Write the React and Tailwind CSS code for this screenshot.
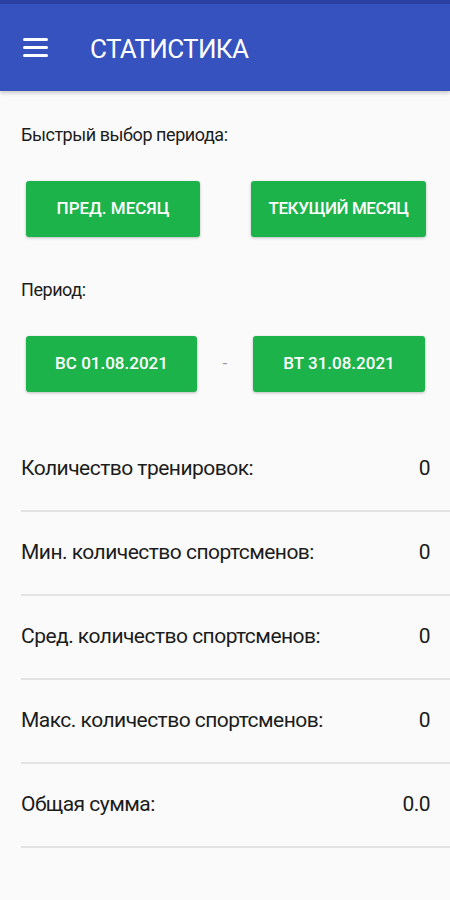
const rows = [
  { label: 'Количество тренировок:', value: '0' },
  { label: 'Мин. количество спортсменов:', value: '0' },
  { label: 'Сред. количество спортсменов:', value: '0' },
  { label: 'Макс. количество спортсменов:', value: '0' },
  { label: 'Общая сумма:', value: '0.0' },
];

function GreenButton({ children, className = '' }) {
  return (
    <button
      className={`h-[56px] rounded-[3px] bg-[#1db34b] text-white text-[17px] font-medium shadow-[0_1px_3px_rgba(0,0,0,0.25)] flex items-center justify-center ${className}`}
    >
      {children}
    </button>
  );
}

export default function App() {
  return (
    <div className="min-h-[900px] bg-[#fafafa] font-['Roboto',sans-serif] text-[#1c1c1c]">
      <header className="bg-[#3652bf] shadow-[0_2px_4px_rgba(0,0,0,0.2)]">
        <div className="h-[4px] bg-[#2b40a3]" />
        <div className="h-[87px] flex items-center pl-[23px]">
          <div className="w-[25px] flex flex-col gap-[5px]">
            <span className="h-[3px] bg-white rounded-sm" />
            <span className="h-[3px] bg-white rounded-sm" />
            <span className="h-[3px] bg-white rounded-sm" />
          </div>
          <h1 className="ml-[42px] mt-[3px] text-white text-[26px] tracking-tight">СТАТИСТИКА</h1>
        </div>
      </header>

      <main className="pl-[21px]">
        <p className="pt-[34px] text-[18px] leading-[20px] tracking-tight">Быстрый выбор периода:</p>
        <div className="mt-[36px] flex pl-[5px]">
          <GreenButton className="w-[174px]">ПРЕД. МЕСЯЦ</GreenButton>
          <GreenButton className="w-[175px] ml-[51px] tracking-tight">ТЕКУЩИЙ МЕСЯЦ</GreenButton>
        </div>

        <p className="mt-[43px] text-[18px] leading-[20px] tracking-tight">Период:</p>
        <div className="mt-[36px] flex items-center pl-[5px]">
          <GreenButton className="w-[171px]">ВС 01.08.2021</GreenButton>
          <span className="w-[56px] text-center text-[#999]">-</span>
          <GreenButton className="w-[172px]">ВТ 31.08.2021</GreenButton>
        </div>

        <div className="mt-[36px]">
          {rows.map((r) => (
            <div
              key={r.label}
              className="h-[84px] flex items-center justify-between pr-[20px] border-b-2 border-[#e3e3e3] text-[21px] tracking-tight"
            >
              <span>{r.label}</span>
              <span>{r.value}</span>
            </div>
          ))}
        </div>
      </main>
    </div>
  );
}
